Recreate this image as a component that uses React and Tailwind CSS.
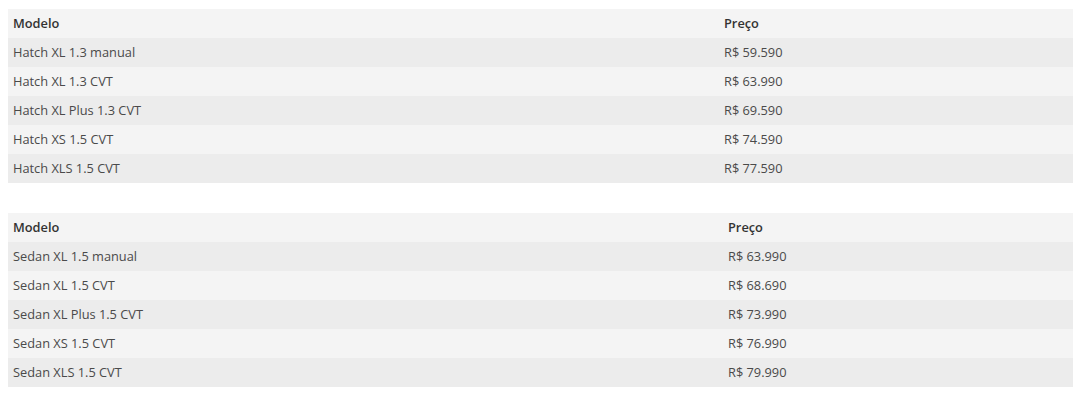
const hatch = [
  ["Hatch XL 1.3 manual", "R$ 59.590"],
  ["Hatch XL 1.3 CVT", "R$ 63.990"],
  ["Hatch XL Plus 1.3 CVT", "R$ 69.590"],
  ["Hatch XS 1.5 CVT", "R$ 74.590"],
  ["Hatch XLS 1.5 CVT", "R$ 77.590"],
];

const sedan = [
  ["Sedan XL 1.5 manual", "R$ 63.990"],
  ["Sedan XL 1.5 CVT", "R$ 68.690"],
  ["Sedan XL Plus 1.5 CVT", "R$ 73.990"],
  ["Sedan XS 1.5 CVT", "R$ 76.990"],
  ["Sedan XLS 1.5 CVT", "R$ 79.990"],
];

function PriceTable({ rows, firstCol }) {
  return (
    <table className="w-[1065px] border-collapse text-[12.8px] text-[#4a4a4a]">
      <thead>
        <tr className="bg-[#f4f4f4] h-[29px]">
          <th className={`${firstCol} text-left font-semibold text-[#333] px-[5px]`}>Modelo</th>
          <th className="text-left font-semibold text-[#333] px-[5px]">Preço</th>
        </tr>
      </thead>
      <tbody>
        {rows.map(([model, price], i) => (
          <tr key={model} className={`h-[29px] ${i % 2 === 0 ? "bg-[#ececec]" : "bg-[#f4f4f4]"}`}>
            <td className="px-[5px]">{model}</td>
            <td className="px-[5px]">{price}</td>
          </tr>
        ))}
      </tbody>
    </table>
  );
}

export default function App() {
  return (
    <div className="bg-white min-h-[400px] pl-[8px] pt-[9px] flex flex-col gap-[30px] font-['Open_Sans',sans-serif]">
      <PriceTable rows={hatch} firstCol="w-[711px]" />
      <PriceTable rows={sedan} firstCol="w-[715px]" />
    </div>
  );
}
